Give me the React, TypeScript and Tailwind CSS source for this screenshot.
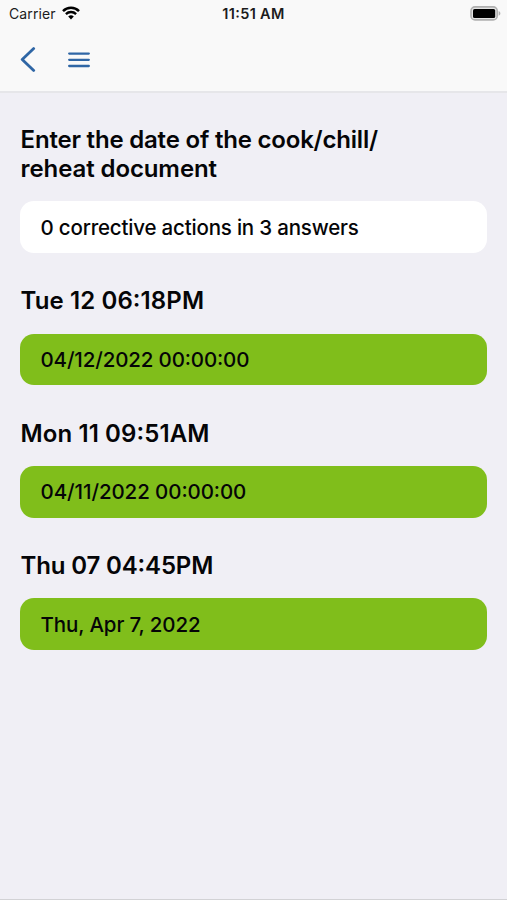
interface Answer {
  title: string;
  value: string;
  titleClass: string;
  valueClass: string;
}

const answers: Answer[] = [
  {
    title: "Tue 12 06:18PM",
    value: "04/12/2022 00:00:00",
    titleClass: "tracking-[0.1px]",
    valueClass: "tracking-[-0.14px]",
  },
  {
    title: "Mon 11 09:51AM",
    value: "04/11/2022 00:00:00",
    titleClass: "tracking-[0.1px]",
    valueClass: "tracking-[-0.08px]",
  },
  {
    title: "Thu 07 04:45PM",
    value: "Thu, Apr 7, 2022",
    titleClass: "tracking-[-0.15px]",
    valueClass: "tracking-[-0.12px]",
  },
];

function WifiIcon() {
  return (
    <svg width="18" height="14" viewBox="0 0 18 14" fill="none" stroke="#000" className="relative -top-px">
      <path d="M1 5.1a11.3 11.3 0 0 1 16 0" strokeWidth="2.5" />
      <path d="M3.9 8.1a7.2 7.2 0 0 1 10.2 0" strokeWidth="2.3" />
      <path d="M9 13.4 6.2 10.5a4 4 0 0 1 5.6 0Z" fill="#000" stroke="none" />
    </svg>
  );
}

function BatteryIcon() {
  return (
    <svg width="31" height="15" viewBox="0 0 31 15">
      <rect x="1" y="0.9" width="26.2" height="13" rx="4" fill="#e4e4e4" stroke="#b0b0b0" strokeWidth="1.6" />
      <rect x="3" y="3" width="22.2" height="9" rx="1.6" fill="#000" />
      <path d="M28.6 5c2.4.9 2.4 3.9 0 4.8Z" fill="#b0b0b0" />
    </svg>
  );
}

function StatusBar() {
  return (
    <div className="grid h-[27px] grid-cols-3 items-center pl-[9px] pr-[6px] text-[14px] leading-[27px] text-[#1c1c1c]">
      <div className="flex items-center gap-[6px]">
        <span className="tracking-[0.1px]">Carrier</span>
        <WifiIcon />
      </div>
      <span className="pr-[3px] text-center text-[14.5px] font-semibold tracking-[0.32px] [font-feature-settings:'calt','case']">
        11:51 AM
      </span>
      <div className="flex justify-end">
        <BatteryIcon />
      </div>
    </div>
  );
}

function NavBar() {
  return (
    <div className="flex h-[65px] items-center pl-[20px] text-[#2f66a5]">
      <button type="button" aria-label="Back">
        <svg width="16" height="26" viewBox="0 0 16 26" fill="none" stroke="currentColor" strokeWidth="2.8" strokeLinecap="round" strokeLinejoin="round">
          <path d="M13.7 1.6 2.2 12.4l11.5 11" />
        </svg>
      </button>
      <button type="button" aria-label="Menu" className="ml-[32px]">
        <svg width="22" height="16" viewBox="0 0 22 16" fill="none" stroke="currentColor" strokeWidth="2.3" strokeLinecap="round">
          <path d="M1.2 1.6h19.6M1.2 7.8h19.6M1.2 14h19.6" />
        </svg>
      </button>
    </div>
  );
}

export default function App() {
  return (
    <div className="flex h-[900px] w-full flex-col border-b border-[#d2d2d5] bg-[#f0eff5] font-['Inter',sans-serif] text-[#050507]">
      <header className="h-[93px] shrink-0 border-b-2 border-[#e6e6e9] bg-[#f9f9f9]">
        <StatusBar />
        <NavBar />
      </header>

      <main className="px-[20px] pt-[31.8px]">
        <h1 className="pl-[0.6px] text-[24px] font-semibold leading-[29px] tracking-[-0.2px]">
          Enter the date of the cook/chill/
          <br />
          <span className="tracking-[-0.1px]">reheat document</span>
        </h1>
        <div className="mt-[18.7px] flex h-[51.5px] items-center rounded-[14px] bg-white px-[20.5px] pt-[2px] text-[20.5px] font-medium tracking-[-0.19px]">
          0 corrective actions in 3 answers
        </div>

        {answers.map((answer) => (
          <section key={answer.title} className="pt-[33.3px]">
            <h2
              className={`pl-[0.6px] text-[24px] font-semibold leading-[29px] [font-feature-settings:'calt','case'] ${answer.titleClass}`}
            >
              {answer.title}
            </h2>
            <div
              className={`mt-[18.5px] flex h-[51.5px] items-center rounded-[14px] bg-[#80be1b] px-[20.5px] pt-[1.8px] text-[20.5px] font-medium [font-feature-settings:'calt','case'] ${answer.valueClass}`}
            >
              {answer.value}
            </div>
          </section>
        ))}
      </main>
    </div>
  );
}
